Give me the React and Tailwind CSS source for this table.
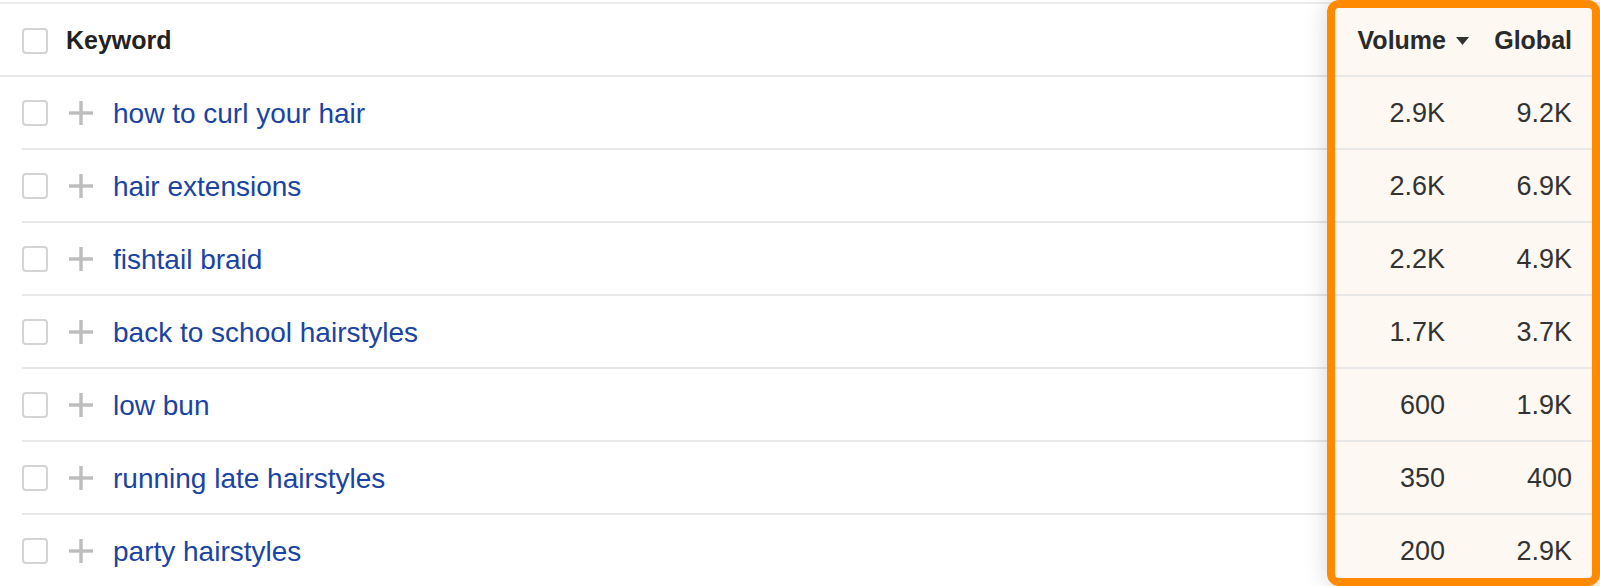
import { useState } from 'react'

const rows = [
  { keyword: 'how to curl your hair', volume: '2.9K', global: '9.2K' },
  { keyword: 'hair extensions', volume: '2.6K', global: '6.9K' },
  { keyword: 'fishtail braid', volume: '2.2K', global: '4.9K' },
  { keyword: 'back to school hairstyles', volume: '1.7K', global: '3.7K' },
  { keyword: 'low bun', volume: '600', global: '1.9K' },
  { keyword: 'running late hairstyles', volume: '350', global: '400' },
  { keyword: 'party hairstyles', volume: '200', global: '2.9K' },
]

function Checkbox({ checked, onChange }) {
  return (
    <button
      onClick={onChange}
      className={`w-[26px] h-[26px] flex-shrink-0 rounded-[4px] border-2 ${
        checked ? 'border-[#1a43a3] bg-[#1a43a3]' : 'border-[#d4d4d4] bg-white'
      }`}
    />
  )
}

function Plus() {
  return (
    <svg width="24" height="24" viewBox="0 0 24 24" className="flex-shrink-0">
      <rect x="10.3" y="0" width="3.4" height="24" fill="#bdbdbd" />
      <rect x="0" y="10.3" width="24" height="3.4" fill="#bdbdbd" />
    </svg>
  )
}

export default function App() {
  const [checked, setChecked] = useState({})
  const toggle = (k) => setChecked((c) => ({ ...c, [k]: !c[k] }))

  return (
    <div
      className="relative h-[586px] w-[1600px] overflow-hidden bg-white"
      style={{ fontFamily: '"Liberation Sans", Arial, sans-serif' }}
    >
      {/* top rule */}
      <div className="mt-[2px] h-[2px] bg-[#ececef]" />

      {/* header */}
      <div className="grid h-[73px] grid-cols-[1fr_135px_130px] border-b-2 border-[#e8e8e8]">
        <div className="flex items-center gap-[18px] pl-[22px] pt-[2px]">
          <Checkbox checked={checked.all} onChange={() => toggle('all')} />
          <span className="text-[25px] font-bold text-[#222]">Keyword</span>
        </div>
        <div className="flex items-center justify-end gap-[10px] bg-[#fdf8f2] pr-[1px] pt-[2px]">
          <span className="text-[25px] font-bold text-[#2a2a2a]">Volume</span>
          <svg width="13" height="8" viewBox="0 0 13 8">
            <path d="M0 0h13L6.5 8z" fill="#333" />
          </svg>
        </div>
        <div className="flex items-center justify-end bg-[#fdf8f2] pr-[28px] pt-[2px]">
          <span className="text-[25px] font-bold text-[#2a2a2a]">Global</span>
        </div>
      </div>

      {/* rows */}
      {rows.map((r) => (
        <div key={r.keyword} className="pl-[22px]">
          <div className="grid h-[73px] grid-cols-[1fr_135px_130px] border-b-2 border-[#e8e8e8]">
            <div className="flex items-center">
              <Checkbox checked={checked[r.keyword]} onChange={() => toggle(r.keyword)} />
              <span className="ml-[21px]">
                <Plus />
              </span>
              <a href="#" className="ml-[20px] pt-[2px] text-[28px] text-[#1a43a3]">
                {r.keyword}
              </a>
            </div>
            <div className="flex items-center justify-end bg-[#fdf8f2] pr-[25px] pt-[2px] text-[27px] text-[#333]">
              {r.volume}
            </div>
            <div className="flex items-center justify-end bg-[#fdf8f2] pr-[28px] pt-[2px] text-[27px] text-[#333]">
              {r.global}
            </div>
          </div>
        </div>
      ))}

      {/* highlight frame over the metric columns */}
      <div className="pointer-events-none absolute right-0 top-0 h-[586px] w-[273px] rounded-[12px] border-[8px] border-[#ff8a00] shadow-[0_0_24px_rgba(0,0,0,0.16)]" />
    </div>
  )
}
